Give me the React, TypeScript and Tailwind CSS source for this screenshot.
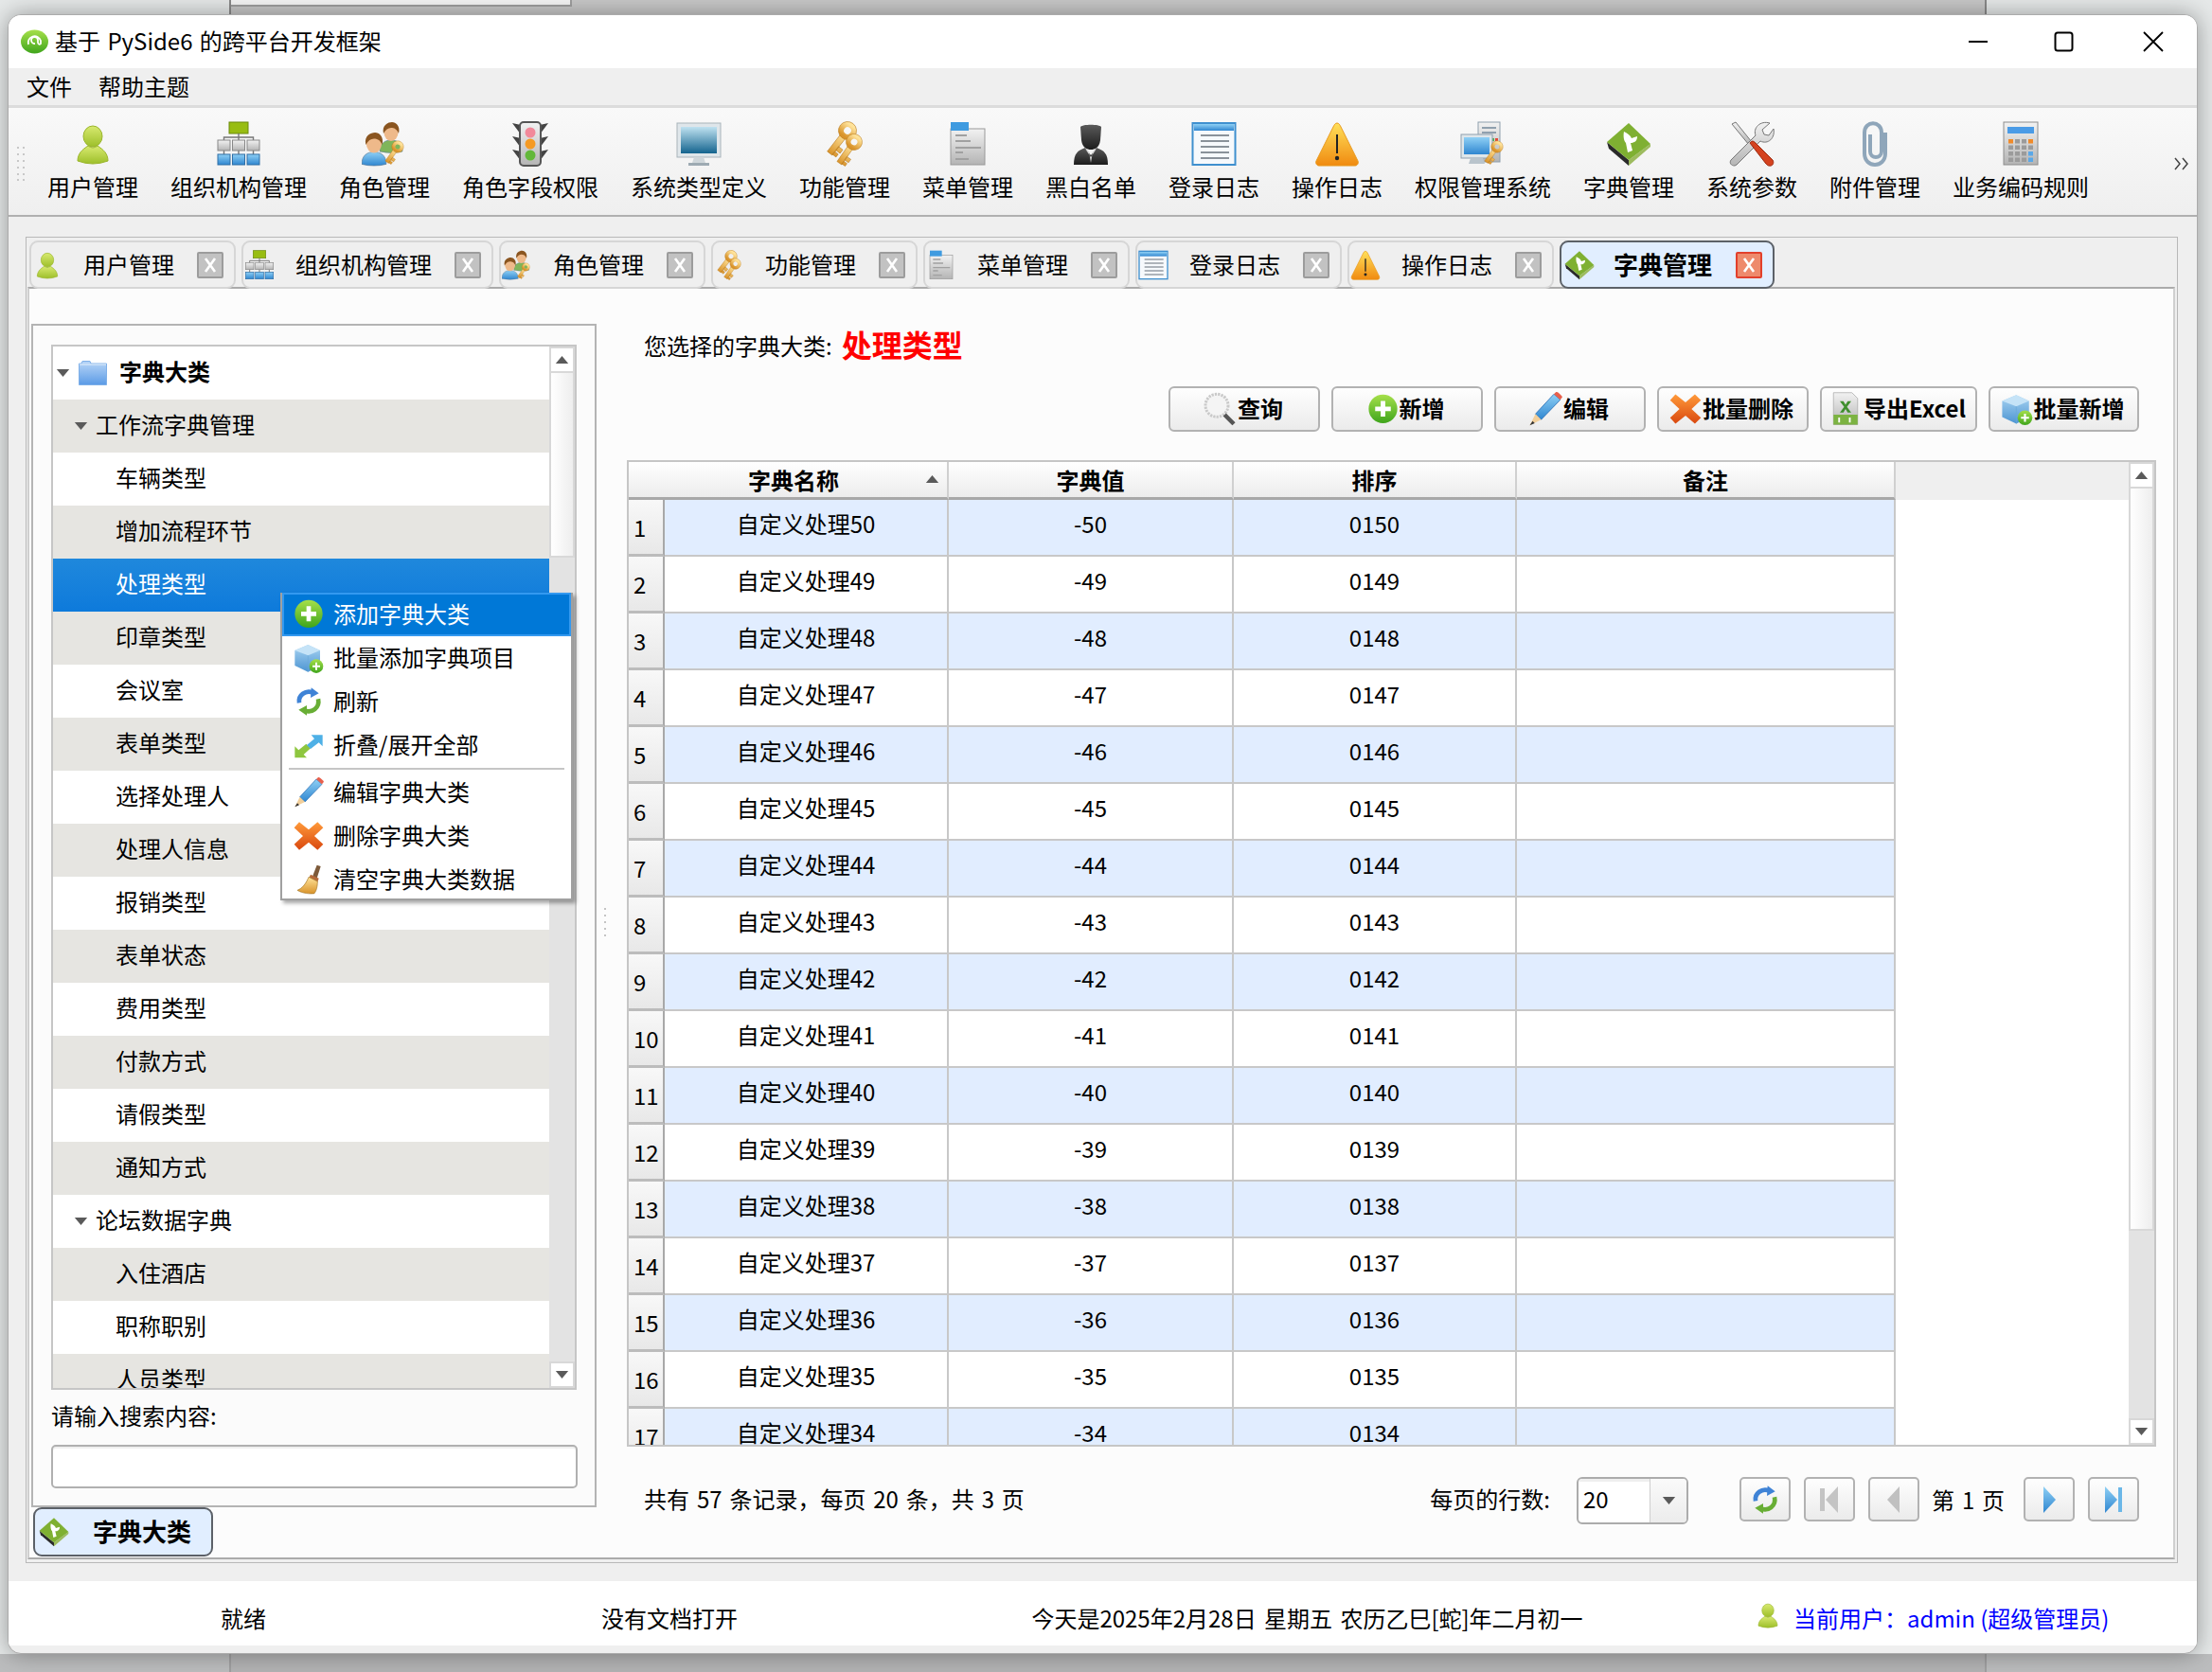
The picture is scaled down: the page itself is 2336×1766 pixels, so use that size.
import type { ReactNode } from "react";

function Ico({ s = 48, children }: { s?: number; children: ReactNode }) {
  return (
    <svg width={s} height={s} viewBox="0 0 48 48" className="shrink-0">
      {children}
    </svg>
  );
}

function SharedDefs() {
  const stops: [string, string, string][] = [
    ["gGreen", "#d8ea70", "#9dbf2a"],
    ["gBlue", "#8fd0f5", "#2f86d0"],
    ["gGold", "#ffe39a", "#d9932a"],
    ["gGray", "#f2f2f2", "#b4b4b4"],
    ["gOrange", "#ffe05a", "#f08a10"],
    ["gScreen", "#bfe2f0", "#14648e"],
    ["gFolder", "#b9d6f7", "#5b9be6"],
    ["gDark", "#5a5a5a", "#1c1c1c"],
    ["gCross", "#ff9a3a", "#d9480f"],
    ["gPlus", "#a6e04a", "#3fa51c"],
    ["gCube", "#a9d4f2", "#4d95d2"],
  ];
  return (
    <svg width="0" height="0" className="absolute">
      <defs>
        {stops.map(([id, a, b]) => (
          <linearGradient key={id} id={id} x1="0" y1="0" x2="0" y2="1">
            <stop offset="0" stopColor={a} />
            <stop offset="1" stopColor={b} />
          </linearGradient>
        ))}
      </defs>
    </svg>
  );
}

function UserIcon({ s }: { s?: number }) {
  return (
    <Ico s={s}>
      <ellipse cx="24" cy="16" rx="10" ry="11" fill="url(#gGreen)" stroke="#9ab52c" />
      <path d="M8 42C8 34 13 30 19 26Q24 30 29 26C35 30 40 34 40 42Q24 48 8 42Z" fill="url(#gGreen)" stroke="#9ab52c" />
    </Ico>
  );
}

function OrgIcon({ s }: { s?: number }) {
  const xs = [2, 17.5, 33];
  return (
    <Ico s={s}>
      <rect x="14" y="1" width="20" height="12" fill="#98bd12" stroke="#6b8a0c" />
      <path d="M24 13V18M8.5 21V17H39.5V21M24 17V21M8.5 31V36M24 31V36M39.5 31V36" stroke="#777" strokeWidth="1.4" fill="none" />
      {xs.map((x) => (
        <rect key={x} x={x} y="20" width="13" height="11" fill="url(#gGray)" stroke="#888" />
      ))}
      {xs.map((x) => (
        <rect key={x} x={x} y="35" width="13" height="11" fill="url(#gBlue)" stroke="#2f6ea5" />
      ))}
    </Ico>
  );
}

function Bust({ dx, dy, shirt, k = 1 }: { dx: number; dy: number; shirt: string; k?: number }) {
  return (
    <g transform={`translate(${dx} ${dy}) scale(${k})`}>
      <path d="M0 30C0 21 6 18 12 18S24 21 24 30Q12 33 0 30Z" fill={shirt} stroke="#5a7a95" strokeWidth=".6" />
      <ellipse cx="12" cy="10" rx="7.5" ry="9" fill="#eeb98a" />
      <path d="M4 11C2 2 9-1 13-1S22 3 20 11C18 6 15 5 12 5S6 7 4 11Z" fill="#8a5520" />
    </g>
  );
}

function Key({ x, y, r, k = 1 }: { x: number; y: number; r: number; k?: number }) {
  return (
    <g transform={`translate(${x} ${y}) rotate(${r}) scale(${k})`}>
      <path d="M-3.5 6H3.5V32H-3.5ZM3 20H9V25H3ZM3 27H8V31H3Z" fill="url(#gGold)" stroke="#b8791c" strokeWidth=".6" />
      <circle cx="0" cy="0" r="7" fill="none" stroke="url(#gGold)" strokeWidth="6" />
      <circle cx="0" cy="0" r="10" fill="none" stroke="#b8791c" strokeWidth=".6" />
    </g>
  );
}

function RoleIcon({ s }: { s?: number }) {
  return (
    <Ico s={s}>
      <Bust dx={19} dy={2} shirt="#7fb55a" />
      <Bust dx={0} dy={13} shirt="url(#gBlue)" k={1.08} />
      <Key x={38} y={27} r={35} k={0.62} />
    </Ico>
  );
}

function TrafficIcon({ s }: { s?: number }) {
  return (
    <Ico s={s}>
      <path d="M14 4L5 2 14 14ZM34 4L43 2 34 14ZM14 18L5 16 14 28ZM34 18L43 16 34 28ZM14 32L5 30 14 42ZM34 32L43 30 34 42Z" fill="#444" />
      <rect x="13" y="1" width="22" height="46" rx="4" fill="url(#gGray)" stroke="#555" strokeWidth="2" />
      <circle cx="24" cy="12" r="5.5" fill="#f2899a" />
      <circle cx="24" cy="24" r="5.5" fill="#f59a23" />
      <circle cx="24" cy="36" r="5.5" fill="#63b83a" />
    </Ico>
  );
}

function MonitorIcon({ s }: { s?: number }) {
  return (
    <Ico s={s}>
      <rect x="1" y="2" width="46" height="36" fill="#dfe6ea" stroke="#a9b4ba" />
      <rect x="5" y="6" width="38" height="28" fill="url(#gScreen)" />
      <path d="M19 38H29L31 44H17Z" fill="#cfd6da" />
      <rect x="13" y="44" width="22" height="3" fill="#9daab2" />
    </Ico>
  );
}

function KeysIcon({ s }: { s?: number }) {
  return (
    <Ico s={s}>
      <Key x={27} y={10} r={38} k={0.95} />
      <Key x={34} y={22} r={35} k={0.85} />
    </Ico>
  );
}

function MenuDocIcon({ s }: { s?: number }) {
  return (
    <Ico s={s}>
      <rect x="6" y="8" width="36" height="38" fill="url(#gGray)" stroke="#999" />
      <rect x="6" y="1" width="19" height="9" fill="#3f9be0" />
      <path d="M11 15H23M11 21H27M11 28H38M11 33H19M11 40H25" stroke="#a0a0a0" strokeWidth="2" />
    </Ico>
  );
}

function BlackIcon({ s }: { s?: number }) {
  return (
    <Ico s={s}>
      <path d="M13 6C15 3 33 3 35 6L34 20C33 28 28 30 24 30S15 28 14 20Z" fill="url(#gDark)" />
      <path d="M6 46C6 34 10 31 18 28L24 36 30 28C38 31 42 34 42 46Z" fill="url(#gDark)" />
      <path d="M18 29L24 38 30 29 26 32 24 44 22 32Z" fill="#d8d8d8" />
    </Ico>
  );
}

function LogIcon({ s }: { s?: number }) {
  return (
    <Ico s={s}>
      <rect x="1.5" y="2" width="45" height="44" fill="#f6f9fc" stroke="#3f90cf" strokeWidth="2" />
      <rect x="3" y="3" width="42" height="7" fill="url(#gBlue)" />
      {[15, 21, 27, 33, 39].map((y) => (
        <path key={y} d={`M10 ${y}H40`} stroke="#8a929a" strokeWidth="2" />
      ))}
    </Ico>
  );
}

function WarnIcon({ s }: { s?: number }) {
  return (
    <Ico s={s}>
      <path d="M24 2C26 2 27 4 28 6L46 42C47 45 45 47 43 47H5C3 47 1 45 2 42L20 6C21 4 22 2 24 2Z" fill="url(#gOrange)" stroke="#e89a20" />
      <path d="M24 14V34" stroke="#222" strokeWidth="2" />
      <circle cx="24" cy="39" r="2.2" fill="#222" />
    </Ico>
  );
}

function PermIcon({ s }: { s?: number }) {
  return (
    <Ico s={s}>
      <rect x="19" y="1" width="23" height="42" fill="url(#gGray)" stroke="#8fa0ae" />
      <path d="M23 7H38M23 12H38" stroke="#8fa0ae" strokeWidth="2" />
      <rect x="33" y="18" width="3" height="3" fill="#4caf50" />
      <rect x="37" y="18" width="3" height="3" fill="#e24a3a" />
      <rect x="1" y="14" width="33" height="25" fill="#dfe6ea" stroke="#8fa0ae" />
      <rect x="4" y="17" width="27" height="18" fill="url(#gBlue)" />
      <path d="M11 39H24L26 45H9Z" fill="#b9c4cc" />
      <Key x={39} y={27} r={35} k={0.62} />
    </Ico>
  );
}

function DictIcon({ s }: { s?: number }) {
  return (
    <Ico s={s}>
      <path d="M1 22L24 41V47L3 29Z" fill="#2a2a2a" />
      <path d="M24 41L47 24V27L24 47Z" fill="#9dbb5e" />
      <path d="M24 2L47 24 24 41 1 22Z" fill="#7fb032" />
      <path d="M19 11C23 13 26 15 27 18L33 16C33 21 30 23 26 23L28 31 23 33 21 23C19 21 18 16 19 11Z" fill="#fff" />
    </Ico>
  );
}

function ToolsIcon({ s }: { s?: number }) {
  return (
    <Ico s={s}>
      <path d="M3 3L7 1 24 22 21 25Z" fill="url(#gGray)" stroke="#777" />
      <path d="M6 47C2 47 0 44 2 41L28 15C25 7 33-1 43 2L35 9 37 14 42 15 47 8C49 18 41 25 33 21L8 46Z" fill="url(#gGray)" stroke="#777" />
      <path d="M22 23C24 20 26 21 28 23L46 41C48 44 46 48 42 47 41 47 40 46 39 45Z" fill="#d4421f" stroke="#9c2a10" />
    </Ico>
  );
}

function ClipIcon({ s }: { s?: number }) {
  return (
    <Ico s={s}>
      <path d="M35 12V34C35 50 13 50 13 34V12C13-1 31-1 31 12V32C31 40 19 40 19 32V14" fill="none" stroke="#8fa6ba" strokeWidth="4" />
    </Ico>
  );
}

function CalcIcon({ s }: { s?: number }) {
  const rows = [19, 25.5, 32, 38.5];
  const cols = [11, 18, 25, 32];
  return (
    <Ico s={s}>
      <rect x="6" y="1" width="36" height="45" fill="url(#gGray)" stroke="#8d8d8d" />
      <rect x="10" y="6" width="28" height="7" fill="#4a9be6" />
      {rows.map((y, r) =>
        cols.map((x, c) => (
          <rect key={`${r}-${c}`} x={x} y={y} width="5" height="4.5" fill={r === 0 && (c === 0 || c === 3) ? "#f08a2a" : r > 1 && c === 3 ? "#5aa8e8" : "#9b9b9b"} />
        )),
      )}
    </Ico>
  );
}

function PlusIcon({ s }: { s?: number }) {
  return (
    <Ico s={s}>
      <circle cx="24" cy="23" r="22" fill="url(#gPlus)" />
      <path d="M24 11V35M12 23H36" stroke="#fff" strokeWidth="7" />
    </Ico>
  );
}

function CubeIcon({ s }: { s?: number }) {
  return (
    <Ico s={s}>
      <path d="M2 12L23 3 42 12V36L23 46 2 36Z" fill="url(#gCube)" />
      <path d="M2 12L23 20 42 12 23 3Z" fill="#c5e3f7" />
      <path d="M23 20V46" stroke="#6aa9da" />
      <circle cx="36" cy="37" r="11" fill="url(#gPlus)" />
      <path d="M36 31V43M30 37H42" stroke="#fff" strokeWidth="3" />
    </Ico>
  );
}

function RefreshIcon({ s }: { s?: number }) {
  return (
    <Ico s={s}>
      <path d="M9 26C7 14 19 5 31 10" fill="none" stroke="#3f83d6" strokeWidth="7" />
      <path d="M28 2L40 11 27 18Z" fill="#3f83d6" />
      <path d="M39 20C42 34 29 43 17 38" fill="none" stroke="#68ae35" strokeWidth="7" />
      <path d="M21 46L8 37 21 30Z" fill="#68ae35" />
    </Ico>
  );
}

function CollapseIcon({ s }: { s?: number }) {
  return (
    <Ico s={s}>
      <path d="M2 44V26L8 32 20 22 27 29 16 39 21 44Z" fill="#8ec63f" />
      <path d="M46 8V26L40 20 27 30 21 24 33 14 28 8Z" fill="#4eb0e6" />
    </Ico>
  );
}

function PencilIcon({ s }: { s?: number }) {
  return (
    <Ico s={s}>
      <path d="M10 31L36 3 45 11 18 39Z" fill="url(#gBlue)" stroke="#1f66b0" />
      <path d="M36 3L39 0C41-1 46 4 48 7L45 11Z" fill="#e8604c" />
      <path d="M10 31L18 39 2 47Z" fill="#f2cf9a" />
      <path d="M6 41L9 44 2 47Z" fill="#333" />
    </Ico>
  );
}

function CrossIcon({ s }: { s?: number }) {
  return (
    <Ico s={s}>
      <path d="M9 2L24 14 38 2 47 11 33 24 47 37 38 46 24 34 9 46 1 37 15 24 1 11Z" fill="url(#gCross)" />
    </Ico>
  );
}

function BroomIcon({ s }: { s?: number }) {
  return (
    <Ico s={s}>
      <path d="M30 19L37 1 43 3 37 22Z" fill="#7d5a3a" />
      <path d="M27 16L40 22 38 28 24 22Z" fill="#b56a3a" />
      <path d="M24 20L38 27C38 36 36 42 33 46 26 47 14 46 6 41 14 38 20 30 24 20Z" fill="url(#gGold)" stroke="#a5782a" />
    </Ico>
  );
}

function SearchIcon({ s }: { s?: number }) {
  return (
    <Ico s={s}>
      <circle cx="20" cy="19" r="16" fill="#f4f4f4" stroke="#c9c9c9" strokeWidth="4" strokeDasharray="3 1.5" />
      <path d="M31 32L44 45" stroke="#555" strokeWidth="6" />
    </Ico>
  );
}

function ExcelIcon({ s }: { s?: number }) {
  return (
    <Ico s={s}>
      <path d="M7 1H33L41 9V46H7Z" fill="url(#gGray)" stroke="#aaa" />
      <path d="M16 13L22 21 16 29H21L24 24 27 29H32L26 21 32 13H27L24 18 21 13Z" fill="#3f8f2e" />
      <rect x="7" y="32" width="34" height="14" fill="#7cb342" />
      <path d="M15 36V43M30 36V43" stroke="#fff" strokeWidth="2.5" />
    </Ico>
  );
}

function FolderIcon() {
  return (
    <svg width="30" height="26" viewBox="0 0 30 26">
      <path d="M.5 3H3L4 .5H12L13 3H29.5V25.5H.5Z" fill="url(#gFolder)" stroke="#7fb0e8" />
      <path d="M1 4H29" stroke="#e3effb" />
    </svg>
  );
}

function AppIcon() {
  return (
    <svg width="29" height="26" viewBox="0 0 29 26">
      <ellipse cx="14.5" cy="13" rx="14.5" ry="12.5" fill="url(#gPlus)" />
      <path d="M8 16A6.5 6.5 0 1 1 21 12V15Q19 17 18 14V11A3.5 3.5 0 1 0 15 15" fill="none" stroke="#fff" strokeWidth="1.8" />
    </svg>
  );
}

function Tri({ up = false, w = 15, h = 8, c = "#5a5a5a" }: { up?: boolean; w?: number; h?: number; c?: string }) {
  return (
    <svg width={w} height={h} viewBox="0 0 10 6" className="shrink-0">
      <path d={up ? "M5 0L10 6H0Z" : "M0 0H10L5 6Z"} fill={c} />
    </svg>
  );
}

function ScrollBar({ thumb }: { thumb: string }) {
  return (
    <div className="flex h-full w-[27px] shrink-0 flex-col bg-[#e3e3e3]">
      <div className="flex h-[28px] shrink-0 items-center justify-center border-2 border-[#d8d8d8] bg-white">
        <Tri up />
      </div>
      <div className={`${thumb} shrink-0 border-2 border-t-0 border-[#d8d8d8] bg-gradient-to-r from-white to-[#eeeeee]`} />
      <div className="flex-1" />
      <div className="flex h-[28px] shrink-0 items-center justify-center border-2 border-[#d8d8d8] bg-white">
        <Tri />
      </div>
    </div>
  );
}

const toolbar: [string, (p: { s?: number }) => ReactNode][] = [
  ["用户管理", UserIcon],
  ["组织机构管理", OrgIcon],
  ["角色管理", RoleIcon],
  ["角色字段权限", TrafficIcon],
  ["系统类型定义", MonitorIcon],
  ["功能管理", KeysIcon],
  ["菜单管理", MenuDocIcon],
  ["黑白名单", BlackIcon],
  ["登录日志", LogIcon],
  ["操作日志", WarnIcon],
  ["权限管理系统", PermIcon],
  ["字典管理", DictIcon],
  ["系统参数", ToolsIcon],
  ["附件管理", ClipIcon],
  ["业务编码规则", CalcIcon],
];

const tabs: [string, (p: { s?: number }) => ReactNode][] = [
  ["用户管理", UserIcon],
  ["组织机构管理", OrgIcon],
  ["角色管理", RoleIcon],
  ["功能管理", KeysIcon],
  ["菜单管理", MenuDocIcon],
  ["登录日志", LogIcon],
  ["操作日志", WarnIcon],
];

const treeLeaves: (string | null)[] = [
  null,
  null,
  "车辆类型",
  "增加流程环节",
  "处理类型",
  "印章类型",
  "会议室",
  "表单类型",
  "选择处理人",
  "处理人信息",
  "报销类型",
  "表单状态",
  "费用类型",
  "付款方式",
  "请假类型",
  "通知方式",
  null,
  "入住酒店",
  "职称职别",
  "人员类型",
];

const rows = Array.from({ length: 17 }, (_, i) => 50 - i);

function CloseBox({ active = false }: { active?: boolean }) {
  return (
    <div
      className={`flex h-[28px] w-[28px] shrink-0 items-center justify-center rounded-[2px] border-2 ${
        active ? "border-[#e2402c] bg-[#ee8a6c]" : "border-[#9c9c9c] bg-[#c2c2c2]"
      }`}
    >
      <svg width="14" height="16" viewBox="0 0 14 16">
        <path d="M2 1L12 15M12 1L2 15" stroke="#fff" strokeWidth="2.6" />
      </svg>
    </div>
  );
}

function ToolButton({ icon, label, w }: { icon: ReactNode; label: string; w: string }) {
  return (
    <div className={`${w} flex h-[48px] items-center justify-center gap-[1px] rounded-[6px] border-2 border-[#b2b2b2] bg-gradient-to-b from-[#fefefe] to-[#ebebeb] pr-[3px] font-bold leading-none`}>
      {icon}
      <span className="mb-[2px]">{label}</span>
    </div>
  );
}

function NavButton({ children }: { children: ReactNode }) {
  return (
    <div className="flex h-[47px] w-[54px] items-center justify-center rounded-[5px] border-2 border-[#b2b2b2] bg-gradient-to-b from-[#fefefe] to-[#ebebeb]">
      {children}
    </div>
  );
}

function MenuItem({ icon, label, active = false }: { icon: ReactNode; label: string; active?: boolean }) {
  return (
    <div className={`flex h-[46px] items-center ${active ? "border-2 border-[#3399f0] bg-[#0078d7] pl-[10px] text-white" : "pl-[12px]"}`}>
      {icon}
      <span className="mb-[3px] ml-[10px] leading-none">{label}</span>
    </div>
  );
}

export default function App() {
  return (
    <div className="relative h-[1766px] w-[2336px] overflow-hidden bg-[#e6e9e9] font-['Noto_Sans_CJK_SC','Liberation_Sans',sans-serif] text-[24px] text-black">
      <SharedDefs />

      {/* the other window behind */}
      <div className="absolute left-[242px] top-[-2px] h-[1770px] w-[1856px] border-x-2 border-[#8a8a8a] bg-[#c8c8c8]">
        <div className="h-[9px] w-[360px] border-b-2 border-r-2 border-[#9f9f9f] bg-[#f6f6f6]" />
      </div>
      <div className="absolute bottom-0 left-0 h-[19px] w-full bg-[#a9a9ab]/70" />

      {/* main window */}
      <div className="absolute left-[8px] top-[15px] flex h-[1732px] w-[2313px] flex-col overflow-hidden rounded-[14px] border border-[#ababab] bg-[#efefef] shadow-[0_0_24px_rgba(0,0,0,0.35)]">
        <div className="flex h-[56px] shrink-0 items-center bg-white pl-[13px]">
          <AppIcon />
          <span className="mb-[2px] ml-[7px] leading-none [word-spacing:2px]">基于 PySide6 的跨平台开发框架</span>
          <svg width="210" height="24" viewBox="0 0 210 24" className="ml-auto mr-[31px]">
            <path d="M0 12H20" stroke="#000" strokeWidth="2" />
            <rect x="91.5" y="2.5" width="18" height="19" rx="2.5" fill="none" stroke="#000" strokeWidth="2" />
            <path d="M185 2L205 22M205 2L185 22" stroke="#000" strokeWidth="1.8" />
          </svg>
        </div>

        <div className="flex h-[42px] shrink-0 items-center gap-[28px] border-b-[3px] border-[#dcdcdc] pb-[2px] pl-[19px] leading-none">
          <span>文件</span>
          <span>帮助主题</span>
        </div>

        <div className="flex h-[115px] shrink-0 items-start border-b-2 border-[#b0b0b0] bg-gradient-to-b from-[#f9f9f9] to-[#efefef] pl-[9px] pt-[14px]">
          <svg width="8" height="36" viewBox="0 0 8 36" className="mt-[27px]">
            {[1, 8, 15, 22, 29, 35].map((y) => (
              <g key={y} fill="#c8c8c8">
                <rect x="0" y={y - 1} width="2" height="2" />
                <rect x="6" y={y - 1} width="2" height="2" />
              </g>
            ))}
          </svg>
          <div className="ml-[24px] flex gap-[34px]">
            {toolbar.map(([label, Icon]) => (
              <div key={label} className="flex flex-col items-center">
                <Icon s={48} />
                <span className="mt-[6px] h-[30px] leading-[30px]">{label}</span>
              </div>
            ))}
          </div>
          <svg width="16" height="14" viewBox="0 0 16 14" className="ml-auto mr-[8px] mt-[38px]">
            <path d="M1 1L6 7 1 13M9 1L14 7 9 13" fill="none" stroke="#444" strokeWidth="1.5" />
          </svg>
        </div>

        {/* tab panel */}
        <div className="ml-[18px] mt-[21px] flex h-[1401px] w-[2273px] flex-col border border-[#b8b8b8] pb-[3px] pl-[1px] pr-[2px]">
          <div className="relative z-10 flex h-[54px] shrink-0 gap-[6px] pl-[2px] pt-[3px]">
            {tabs.map(([label, Icon]) => (
              <div key={label} className="flex h-[51px] items-center rounded-[9px] border-2 border-[#d6d6d6] bg-[#efefef] pl-[1px]">
                <Icon s={32} />
                <span className="mb-[2px] ml-[22px] leading-none">{label}</span>
                <div className="ml-[24px] mr-[11px]">
                  <CloseBox />
                </div>
              </div>
            ))}
            <div className="flex h-[51px] items-center rounded-[9px] border-2 border-[#5c6168] bg-[#e1eeff] pl-[3px]">
              <DictIcon s={32} />
              <span className="mb-[2px] ml-[20px] text-[26px] font-bold leading-none">字典管理</span>
              <div className="ml-[25px] mr-[11px]">
                <CloseBox active />
              </div>
            </div>
          </div>

          <div className="-mt-[2px] flex flex-1 border-2 border-x-[#cfcfcf] border-y-[#ababab] bg-[#fcfcfc] pl-[2px]">
            {/* left dock */}
            <div className="flex w-[597px] shrink-0 flex-col pt-[37px]">
              <div className="h-[1250px] border-2 border-[#b4b4b4] bg-[#fbfbfb] pl-[19px] pt-[20px]">
                <div className="flex h-[1104px] w-[555px] overflow-hidden border-2 border-[#c6c6c6] bg-white">
                  <div className="w-[524px] shrink-0 overflow-hidden">
                    {treeLeaves.map((leaf, i) => {
                      const alt = i % 2 === 1 ? "bg-[#e6e5e1]" : "bg-white";
                      if (i === 0) {
                        return (
                          <div key={i} className="flex h-[56px] items-center pl-[3px]">
                            <Tri />
                            <span className="ml-[9px] flex">
                              <FolderIcon />
                            </span>
                            <span className="mb-[4px] ml-[13px] font-bold leading-none">字典大类</span>
                          </div>
                        );
                      }
                      if (leaf === null) {
                        return (
                          <div key={i} className={`flex h-[56px] items-center pl-[22px] ${alt}`}>
                            <Tri />
                            <span className="mb-[4px] ml-[8px] leading-none">{i === 1 ? "工作流字典管理" : "论坛数据字典"}</span>
                          </div>
                        );
                      }
                      return (
                        <div
                          key={i}
                          className={`flex h-[56px] items-center pb-[4px] pl-[66px] leading-none ${
                            i === 4 ? "bg-gradient-to-b from-[#1f88dc] to-[#0d7adb] text-white" : alt
                          }`}
                        >
                          {leaf}
                        </div>
                      );
                    })}
                  </div>
                  <ScrollBar thumb="h-[195px]" />
                </div>
                <div className="mt-[12px] h-[30px] leading-[30px]">请输入搜索内容:</div>
                <div className="mt-[16px] h-[46px] w-[556px] rounded-[5px] border-2 border-[#b0b0b0] bg-white shadow-[inset_0_2px_0_#efefef]" />
              </div>
              <div className="ml-[2px] flex h-[52px] w-[190px] items-center rounded-[9px] border-2 border-[#5c6168] bg-[#e1eeff] pl-[4px]">
                <DictIcon s={32} />
                <span className="mb-[3px] ml-[25px] text-[26px] font-bold leading-none">字典大类</span>
              </div>
            </div>

            {/* splitter */}
            <div className="flex w-[10px] shrink-0 items-center justify-end">
              <svg width="2" height="32" viewBox="0 0 2 32">
                {[0, 7, 14, 21, 28].map((y) => (
                  <rect key={y} y={y} width="2" height="2" fill="#c4c4c4" />
                ))}
              </svg>
            </div>

            {/* right content */}
            <div className="w-[1655px] shrink-0">
              <div className="mt-[36px] flex h-[48px] items-center pl-[40px]">
                <span className="leading-none">您选择的字典大类:</span>
                <span className="mb-[4px] ml-[10px] text-[32px] font-bold leading-none text-[#ff0000]">处理类型</span>
              </div>

              <div className="mt-[19px] flex justify-end gap-[12px] pr-[36px]">
                <ToolButton w="w-[160px]" icon={<SearchIcon s={36} />} label="查询" />
                <ToolButton w="w-[160px]" icon={<PlusIcon s={33} />} label="新增" />
                <ToolButton w="w-[160px]" icon={<PencilIcon s={36} />} label="编辑" />
                <ToolButton w="w-[160px]" icon={<CrossIcon s={34} />} label="批量删除" />
                <ToolButton w="w-[166px]" icon={<ExcelIcon s={36} />} label="导出Excel" />
                <ToolButton w="w-[159px]" icon={<CubeIcon s={34} />} label="批量新增" />
              </div>

              <div className="ml-[22px] mt-[30px] flex h-[1042px] w-[1615px] overflow-hidden border-2 border-[#c6c6c6] bg-white">
                <div className="w-[1584px] shrink-0 overflow-hidden">
                  <div className="flex h-[40px] bg-[#efefef] font-bold leading-none">
                    <div className="relative flex w-[338px] items-center justify-center border-b-[3px] border-r-2 border-b-[#a8a8a8] border-r-[#d0d0d0] bg-gradient-to-b from-white to-[#ececec] pl-[12px]">
                      字典名称
                      <span className="absolute right-[8px] top-[14px] flex">
                        <Tri up />
                      </span>
                    </div>
                    {[
                      ["字典值", "w-[301px]"],
                      ["排序", "w-[299px]"],
                      ["备注", "w-[400px]"],
                    ].map(([h, w]) => (
                      <div key={h} className={`${w} flex items-center justify-center border-b-[3px] border-r-2 border-b-[#a8a8a8] border-r-[#d0d0d0] bg-gradient-to-b from-white to-[#ececec]`}>
                        {h}
                      </div>
                    ))}
                  </div>
                  {rows.map((n, i) => {
                    const bg = i % 2 === 0 ? "bg-[#e1edff]" : "bg-white";
                    const cell = "flex items-center justify-center border-b-2 border-r-2 border-[#c8c8c8] pb-[8px] leading-none";
                    const order = String(n + 100).padStart(4, "0");
                    return (
                      <div key={n} className="flex h-[60px] shrink-0">
                        <div className="flex w-[38px] items-center border-b-[3px] border-r-2 border-b-[#bcbcbc] border-r-[#a8a8a8] bg-gradient-to-b from-[#f8f8f8] to-[#e8e8e8] pl-[5px] pt-[1px] leading-none">
                          {i + 1}
                        </div>
                        <div className={`${cell} ${bg} w-[300px]`}>自定义处理{n}</div>
                        <div className={`${cell} ${bg} w-[301px]`}>-{n}</div>
                        <div className={`${cell} ${bg} w-[299px]`}>{order}</div>
                        <div className={`${cell} ${bg} w-[400px]`} />
                      </div>
                    );
                  })}
                </div>
                <ScrollBar thumb="h-[784px]" />
              </div>

              <div className="ml-[40px] mt-[32px] flex h-[50px] w-[1579px] items-center">
                <span className="mb-[4px] leading-none [word-spacing:2.5px]">共有 57 条记录，每页 20 条，共 3 页</span>
                <span className="mb-[4px] ml-auto leading-none">每页的行数:</span>
                <div className="ml-[28px] flex h-[50px] w-[118px] overflow-hidden rounded-[6px] border-2 border-[#acacac] bg-white leading-none">
                  <div className="flex w-[75px] items-center pb-[4px] pl-[5px] shadow-[inset_0_3px_0_#efefef]">20</div>
                  <div className="flex flex-1 items-center justify-center border-l border-[#cfcfcf] bg-gradient-to-b from-[#fafafa] to-[#ececec]">
                    <Tri />
                  </div>
                </div>
                <div className="ml-[54px] flex items-center gap-[13px] self-start">
                  <NavButton>
                    <RefreshIcon s={32} />
                  </NavButton>
                  <div className="ml-[1px]">
                    <NavButton>
                      <svg width="22" height="30" viewBox="0 0 22 30">
                        <rect x="1" y="3" width="5" height="24" fill="#c4c4c4" />
                        <path d="M20 1V29L7 15Z" fill="#c4c4c4" />
                      </svg>
                    </NavButton>
                  </div>
                  <div className="ml-[1px]">
                    <NavButton>
                      <svg width="16" height="30" viewBox="0 0 16 30">
                        <path d="M14 1V29L1 15Z" fill="#c0c0c0" />
                      </svg>
                    </NavButton>
                  </div>
                  <span className="w-[76px] whitespace-nowrap leading-[42px] [word-spacing:2.5px]">第 1 页</span>
                  <div className="ml-[8px]">
                    <NavButton>
                      <svg width="16" height="30" viewBox="0 0 16 30">
                        <path d="M2 1V29L15 15Z" fill="url(#gBlue)" />
                      </svg>
                    </NavButton>
                  </div>
                  <div className="ml-[1px]">
                    <NavButton>
                      <svg width="22" height="30" viewBox="0 0 22 30">
                        <path d="M2 1V29L15 15Z" fill="url(#gBlue)" />
                        <rect x="16" y="2" width="4" height="26" fill="#6bb7e8" />
                      </svg>
                    </NavButton>
                  </div>
                </div>
              </div>
            </div>
          </div>
        </div>

        {/* status bar */}
        <div className="mt-[19px] grid h-[68px] shrink-0 grid-cols-[496px_404px_943px_1fr] items-center bg-white pt-[9px] text-center leading-none">
          <span>就绪</span>
          <span>没有文档打开</span>
          <span className="[word-spacing:3px]">今天是2025年2月28日 星期五 农历乙巳[蛇]年二月初一</span>
          <span className="-mt-[5px] flex items-center text-[#0000ff]">
            <UserIcon s={30} />
            <span className="mt-[5px] ml-[12px]">当前用户：admin (超级管理员)</span>
          </span>
        </div>
      </div>

      {/* context menu */}
      <div className="absolute left-[296px] top-[626px] h-[325px] w-[309px] border-2 border-t-0 border-[#a0a0a0] bg-white shadow-[3px_3px_4px_rgba(0,0,0,0.35)]">
        <MenuItem active icon={<PlusIcon s={32} />} label="添加字典大类" />
        <MenuItem icon={<CubeIcon s={32} />} label="批量添加字典项目" />
        <MenuItem icon={<RefreshIcon s={32} />} label="刷新" />
        <MenuItem icon={<CollapseIcon s={32} />} label="折叠/展开全部" />
        <div className="mx-[7px] my-px h-[2px] bg-[#c6c6c6]" />
        <MenuItem icon={<PencilIcon s={32} />} label="编辑字典大类" />
        <MenuItem icon={<CrossIcon s={32} />} label="删除字典大类" />
        <MenuItem icon={<BroomIcon s={32} />} label="清空字典大类数据" />
      </div>
    </div>
  );
}
